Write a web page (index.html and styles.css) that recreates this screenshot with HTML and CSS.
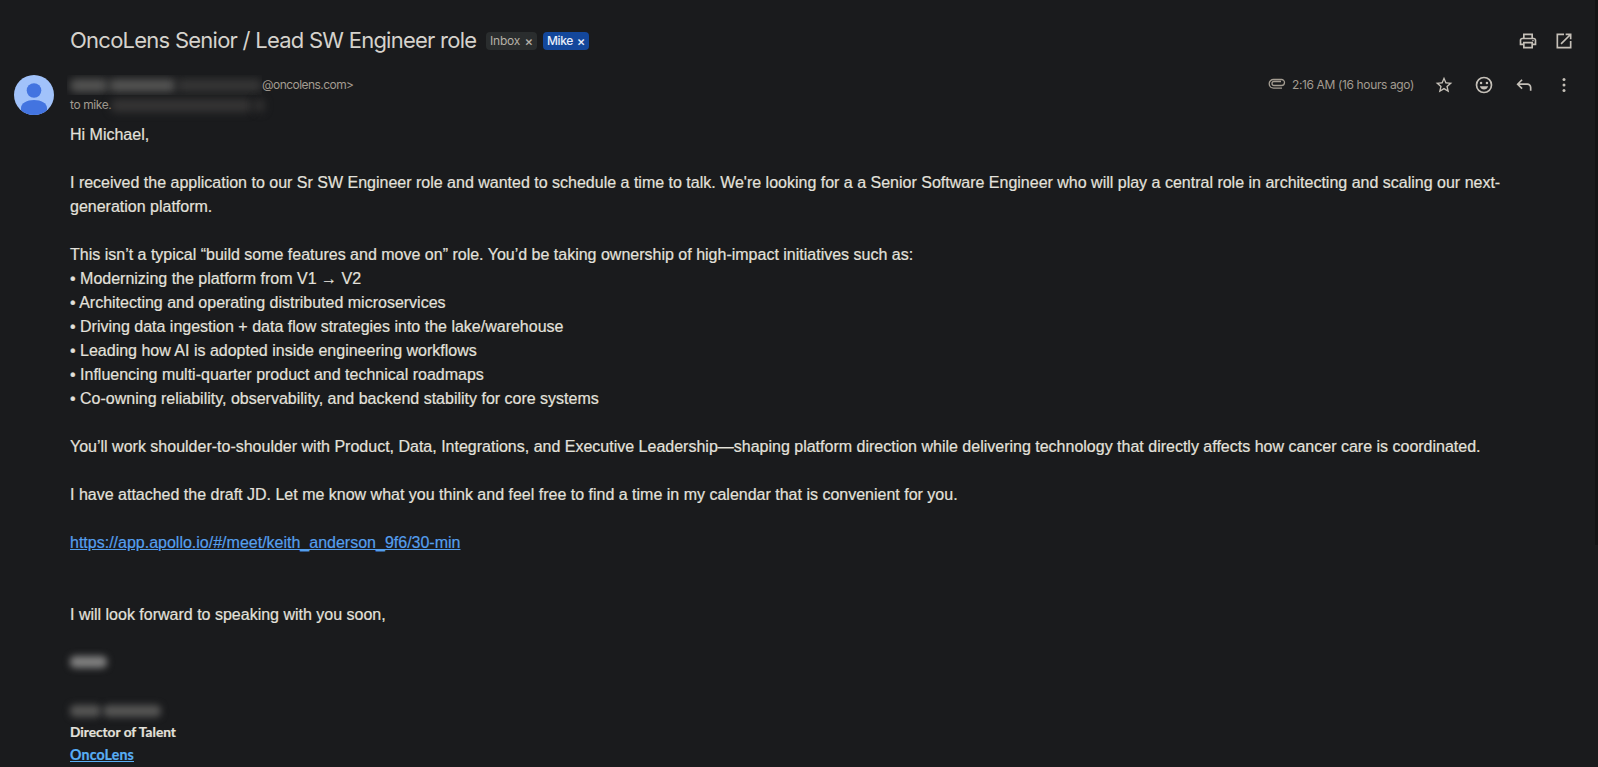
FILE: index.html
```html
<!DOCTYPE html>
<html lang="en">
<head>
  <meta charset="utf-8">
  <title>OncoLens Senior / Lead SW Engineer role</title>
  <link rel="stylesheet" href="styles.css">
</head>
<body>
  <header class="subject">
    <h2>OncoLens Senior / Lead SW Engineer role</h2>
    <span class="label inbox">Inbox <b>×</b></span>
    <span class="label mike">Mike <b>×</b></span>
    <div class="tools">
      <svg viewBox="0 0 24 24"><path d="M19 8h-1V3H6v5H5c-1.66 0-3 1.34-3 3v6h4v4h12v-4h4v-6c0-1.66-1.34-3-3-3zM8 5h8v3H8V5zm8 14H8v-4h8v4zm2-4v-2H6v2H4v-4c0-.55.45-1 1-1h14c.55 0 1 .45 1 1v4h-2z"/><circle cx="18" cy="11.5" r="1"/></svg>
      <svg viewBox="0 0 24 24"><path d="M19 19H5V5h7V3H3v18h18v-9h-2v7zM14 3v2h3.59l-9.83 9.83 1.41 1.41L19 6.41V10h2V3h-7z"/></svg>
    </div>
  </header>

  <div class="sender">
    <svg class="avatar" viewBox="0 0 40 40">
      <clipPath id="round"><circle cx="20" cy="20" r="20"/></clipPath>
      <g clip-path="url(#round)">
        <rect width="40" height="40" fill="#a1c2fa"/>
        <circle cx="20" cy="15.5" r="7.3" fill="#4374e0"/>
        <path d="M7 40v-7c0-5 6-8 13-8s13 3 13 8v7z" fill="#4374e0"/>
      </g>
    </svg>
    <div class="who">
      <div class="from"><span class="hidden-name"><i class="w1"></i><i class="w2"></i><i class="w3"></i></span>@oncolens.com&gt;</div>
      <div class="to">to mike.<span class="hidden-to"><i></i><i class="arrow"></i></span></div>
    </div>
    <div class="meta">
      <svg class="clip" viewBox="0 0 18 12"><path d="M13 3.500H6a2 2 0 0 0 0 4h7.500a3 3 0 0 0 0-6H5.500a4.300 4.300 0 0 0 0 8.600H14"/></svg>
      <span class="time">2:16 AM (16 hours ago)</span>
      <svg viewBox="0 0 24 24"><path d="M22 9.240l-7.190-.620L12 2 9.190 8.630 2 9.240l5.460 4.730L5.820 21 12 17.270 18.180 21l-1.630-7.030L22 9.240zM12 15.400l-3.760 2.270 1-4.280-3.320-2.880 4.380-.380L12 6.100l1.710 4.040 4.380.380-3.320 2.880 1 4.280L12 15.400z"/></svg>
      <svg viewBox="0 0 24 24"><path d="M12 2a10 10 0 1 0 0 20 10 10 0 0 0 0-20zm0 18a8 8 0 1 1 0-16 8 8 0 0 1 0 16z"/><circle cx="8.500" cy="9.500" r="1.500"/><circle cx="15.500" cy="9.500" r="1.500"/><path d="M7 13.500h10c-.7 2.400-2.700 4-5 4s-4.300-1.600-5-4z"/></svg>
      <svg viewBox="0 0 24 24"><path d="M19 19v-4c0-1.700-1.300-3-3-3H6.800l3.600 3.600L9 17l-6-6 6-6 1.400 1.400L6.800 10H16c2.800 0 5 2.200 5 5v4h-2z"/></svg>
      <svg viewBox="0 0 24 24"><circle cx="12" cy="5.500" r="1.800"/><circle cx="12" cy="12" r="1.800"/><circle cx="12" cy="18.500" r="1.800"/></svg>
    </div>
  </div>

  <main class="message">
    <p>Hi Michael,</p>
    <p>I received the application to our Sr SW Engineer role and wanted to schedule a time to talk. We're looking for a a Senior Software Engineer who will play a central role in architecting and scaling our next-generation platform.</p>
    <p>
      This isn’t a typical “build some features and move on” role. You’d be taking ownership of high-impact initiatives such as:<br>
      • Modernizing the platform from V1 → V2<br>
      • Architecting and operating distributed microservices<br>
      • Driving data ingestion + data flow strategies into the lake/warehouse<br>
      • Leading how AI is adopted inside engineering workflows<br>
      • Influencing multi-quarter product and technical roadmaps<br>
      • Co-owning reliability, observability, and backend stability for core systems
    </p>
    <p>You’ll work shoulder-to-shoulder with Product, Data, Integrations, and Executive Leadership—shaping platform direction while delivering technology that directly affects how cancer care is coordinated.</p>
    <p>I have attached the draft JD. Let me know what you think and feel free to find a time in my calendar that is convenient for you.</p>
    <p class="link"><a href="#">https://app.apollo.io/#/meet/keith_anderson_9f6/30-min</a></p>
    <p>I will look forward to speaking with you soon,</p>
    <div class="hidden-sign"><i></i></div>
    <div class="hidden-full"><i></i><i></i></div>
    <div class="signature">
      <div>Director of Talent</div>
      <a href="#">OncoLens</a>
    </div>
  </main>
  <div class="scroll-thumb"></div>
</body>
</html>
```
FILE: styles.css
```css
* {
  box-sizing: border-box;
}

body {
  margin: 0;
  height: 767px;
  overflow: hidden;
  background: #1a1b1d;
  color: #e3e1dc;
  font-family: "Liberation Sans", Arial, sans-serif;
}

svg {
  fill: #c5c0b8;
  flex: none;
}

.subject {
  display: flex;
  align-items: center;
  height: 42px;
  margin-top: 20px;
  padding: 0 24px 0 70px;
  font-family: Inter, sans-serif;
}

.subject h2 {
  margin: 0 10px 2px 0;
  width: 406px;
  font-size: 22px;
  font-weight: 400;
  letter-spacing: -0.75px;
  white-space: nowrap;
  color: #d5d2cc;
}

.label {
  display: flex;
  align-items: center;
  justify-content: space-between;
  height: 18px;
  padding: 0 4px 1px;
  border-radius: 4px;
  font-size: 12px;
  letter-spacing: -0.2px;
}

.label b {
  font-size: 13px;
  font-weight: 500;
}

.inbox {
  width: 51px;
  margin-right: 6px;
  background: #2a2d2e;
  color: #b5b0a7;
}

.mike {
  width: 46px;
  background: #13479b;
  color: #e8eefa;
  font-weight: 500;
  letter-spacing: -0.4px;
}

.tools {
  display: flex;
  gap: 16px;
  margin-left: auto;
}

.tools svg {
  width: 20px;
  height: 20px;
}

.sender {
  display: flex;
  height: 61px;
  padding: 13px 24px 0 14px;
  font-family: Inter, sans-serif;
  font-size: 12px;
  color: #a39c91;
}

.avatar {
  width: 40px;
  height: 40px;
  margin-right: 16px;
}

.who {
  line-height: 20px;
}

.from,
.to {
  display: flex;
}

.from {
  letter-spacing: -0.55px;
}

.to {
  letter-spacing: -0.4px;
}

.hidden-name,
.hidden-to {
  display: flex;
  align-items: center;
}

.hidden-name {
  width: 195px;
  height: 20px;
  margin-left: -3px;
  padding-left: 3px;
  overflow: hidden;
}

.hidden-name i,
.hidden-to i,
.hidden-sign i,
.hidden-full i {
  height: 13px;
  border-radius: 5px;
  background: #555554;
  filter: blur(4px);
}

.hidden-name .w1 {
  width: 38px;
  margin-right: 1px;
}

.hidden-name .w2 {
  width: 67px;
  margin-right: 1px;
}

.hidden-name .w3 {
  width: 85px;
  background: #363636;
}

.hidden-to i {
  width: 141px;
  background: #363535;
}

.hidden-to .arrow {
  width: 9px;
  margin-left: 3px;
}

.meta {
  display: flex;
  align-items: center;
  height: 20px;
  margin-left: auto;
}

.meta svg {
  width: 20px;
  height: 20px;
  margin-left: 20px;
}

.meta .clip {
  width: 18px;
  height: 12px;
  margin: 0 6px 3px 0;
  fill: none;
  stroke: #a39c91;
  stroke-width: 1.3;
}

.time {
  width: 122px;
  margin-bottom: 1px;
  letter-spacing: -0.37px;
  white-space: nowrap;
}

.message {
  padding: 0 60px 0 70px;
  font-size: 16px;
  line-height: 24px;
  -webkit-text-stroke: 0.2px;
}

.message p {
  margin: 0 0 24px;
}

.message .link {
  margin-bottom: 48px;
}

a {
  color: #559fee;
}

.hidden-sign,
.hidden-full {
  display: flex;
  align-items: center;
}

.hidden-sign {
  height: 22px;
  margin-bottom: 26px;
}

.hidden-sign i {
  width: 37px;
  height: 12px;
  background: #808080;
  filter: blur(3.5px);
}

.hidden-full {
  height: 24px;
  margin-bottom: -3px;
}

.hidden-full i {
  width: 31px;
  height: 12px;
  margin-right: 2px;
  filter: blur(3.5px);
}

.hidden-full i + i {
  width: 58px;
}

.signature {
  font-family: Lato, sans-serif;
  font-size: 13.7px;
  font-weight: 700;
  line-height: 23px;
}

.signature a {
  font-size: 14.2px;
  letter-spacing: 0.15px;
  color: #58aef5;
}

.scroll-thumb {
  position: absolute;
  top: 0;
  right: 0;
  width: 3px;
  height: 545px;
  background: #131415;
}
```
